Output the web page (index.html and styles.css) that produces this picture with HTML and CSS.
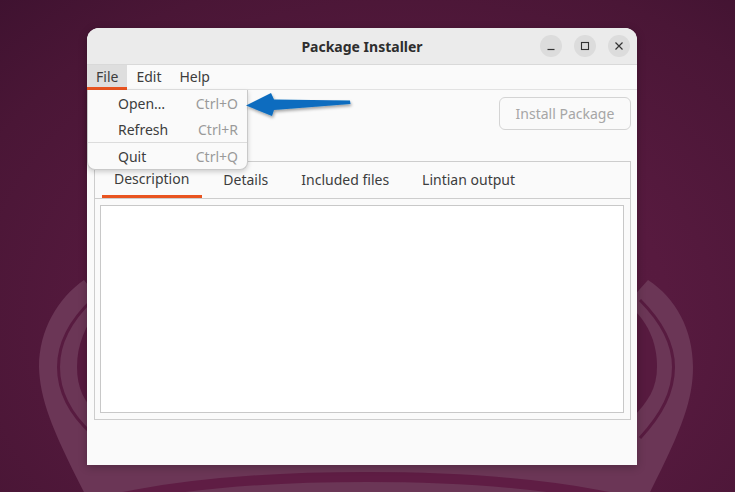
FILE: index.html
```html
<!DOCTYPE html>
<html>
<head>
<meta charset="utf-8">
<link rel="stylesheet" href="styles.css">
</head>
<body>
<div class="desktop">
  <svg class="wallpaper" width="735" height="492" viewBox="0 0 735 492">
    <path class="band" d="M84 280 C58 298 39 330 39 367 C40 400 52 430 88 500 L646 500 C682 430 693 400 693 367 C693 330 676 298 648 280 L630 300 L100 300 Z"/>
    <path class="hole" d="M100 308 C85 325 77 345 77 367 C77 388 84 402 100 418 L632 418 C648 402 657 388 657 367 C657 345 650 325 632 308 Z"/>
    <path class="line" d="M92 300 C69 322 58.5 345 58.5 367 C58.5 392 70 414 92 434"/>
    <path class="line" d="M640 300 C662 322 673.5 345 673.5 367 C673.5 392 662 414 640 438"/>
    <ellipse class="arc" cx="366" cy="537" rx="326" ry="60"/>
  </svg>

  <div class="window">
    <div class="titlebar">
      <span class="title">Package Installer</span>
      <div class="controls">
        <span class="ctl"><svg width="10" height="10" viewBox="0 0 10 10"><path d="M1.5 8.5 H8.5" stroke="#333" stroke-width="1.2"/></svg></span>
        <span class="ctl"><svg width="10" height="10" viewBox="0 0 10 10"><rect x="1.5" y="1.5" width="7" height="7" fill="none" stroke="#333" stroke-width="1.1"/></svg></span>
        <span class="ctl"><svg width="10" height="10" viewBox="0 0 10 10"><path d="M1.5 1.5 L8.5 8.5 M8.5 1.5 L1.5 8.5" stroke="#333" stroke-width="1.2"/></svg></span>
      </div>
    </div>
    <div class="menubar">
      <span class="mitem active">File</span>
      <span class="mitem">Edit</span>
      <span class="mitem">Help</span>
    </div>
    <div class="content">
      <div class="toprow">
        <button class="install">Install Package</button>
      </div>
      <div class="notebook">
        <div class="tabs">
          <span class="tab current">Description</span>
          <span class="tab">Details</span>
          <span class="tab">Included files</span>
          <span class="tab">Lintian output</span>
        </div>
        <div class="page">
          <div class="textview"></div>
        </div>
      </div>
    </div>

    <div class="dropdown">
      <div class="ditem"><span>Open…</span><span class="accel">Ctrl+O</span></div>
      <div class="ditem"><span>Refresh</span><span class="accel">Ctrl+R</span></div>
      <div class="sep"></div>
      <div class="ditem"><span>Quit</span><span class="accel">Ctrl+Q</span></div>
    </div>
  </div>

  <svg class="arrow" width="120" height="40" viewBox="240 85 120 40">
    <defs>
      <filter id="sh" x="-20%" y="-40%" width="140%" height="180%">
        <feDropShadow dx="1" dy="2" stdDeviation="1.5" flood-color="#000" flood-opacity="0.35"/>
      </filter>
    </defs>
    <path d="M246 105.5 L271 93 L274 99.5 L350 100.5 L350.5 104 L274 110 L272 116 Z" fill="#0a6cbf" filter="url(#sh)"/>
  </svg>
</div>
</body>
</html>
```

FILE: styles.css
```css
* { box-sizing: border-box; }

html, body {
  margin: 0;
  padding: 0;
}

body {
  width: 735px;
  height: 492px;
  overflow: hidden;
  font-family: "Noto Sans", "DejaVu Sans", sans-serif;
  font-size: 14px;
  color: #3d3d3d;
}

.desktop {
  position: relative;
  width: 735px;
  height: 492px;
  background: radial-gradient(ellipse 80% 90% at 55% 65%, #5b1c42 0%, #571a3f 45%, #4a1636 80%, #3f1230 100%);
  overflow: hidden;
}

.wallpaper {
  position: absolute;
  left: 0;
  top: 0;
}

.band { fill: #6b3656; }
.hole { fill: #571a3f; }
.line { fill: none; stroke: #581b40; stroke-width: 3; }
.arc { fill: none; stroke: #5f1d44; stroke-width: 10; }

.window {
  position: absolute;
  left: 87px;
  top: 28px;
  width: 550px;
  height: 437px;
  background: #fafafa;
  border-radius: 12px 12px 0 0;
  display: flex;
  flex-direction: column;
  box-shadow: 0 2px 8px rgba(0, 0, 0, 0.25);
}

.titlebar {
  height: 37px;
  flex: none;
  background: #ebebeb;
  border-radius: 12px 12px 0 0;
  border-bottom: 1px solid #d9d9d9;
  display: flex;
  align-items: center;
  justify-content: center;
  position: relative;
}

.title {
  font-weight: bold;
  font-size: 14px;
  color: #2e2e2e;
}

.controls {
  position: absolute;
  right: 7px;
  top: 7px;
  display: flex;
  gap: 12px;
}

.ctl {
  width: 22px;
  height: 22px;
  border-radius: 50%;
  background: #dcdcdc;
  display: flex;
  align-items: center;
  justify-content: center;
}

.menubar {
  height: 25px;
  flex: none;
  display: flex;
  background: #fafafa;
  border-bottom: 1px solid #e2e2e2;
}

.mitem {
  padding: 0 9px;
  height: 25px;
  line-height: 23px;
  color: #3d3d3d;
}

.mitem.active {
  background: #dedede;
  border-bottom: 3px solid #e95420;
}

.content {
  flex: 1;
  padding: 7px 6px 45px 7px;
  display: flex;
  flex-direction: column;
}

.toprow {
  display: flex;
  justify-content: flex-end;
  height: 33px;
  margin-bottom: 31px;
}

.install {
  font-family: inherit;
  font-size: 14px;
  color: #a6a6a6;
  background: #fafafa;
  border: 1px solid #d4d4d4;
  border-radius: 6px;
  width: 132px;
  height: 33px;
  padding: 0;
}

.notebook {
  flex: 1;
  border: 1px solid #cdcdcd;
  display: flex;
  flex-direction: column;
}

.tabs {
  height: 37px;
  flex: none;
  display: flex;
  gap: 9px;
  padding-left: 7px;
  border-bottom: 1px solid #cdcdcd;
}

.tab {
  padding: 0 12px;
  line-height: 36px;
  height: 36px;
  color: #3d3d3d;
}

.tab.current {
  padding: 0 13px 0 12px;
  border-bottom: 3px solid #e95420;
  line-height: 33px;
}

.page {
  flex: 1;
  padding: 6px 6px 6px 5px;
  display: flex;
}

.textview {
  flex: 1;
  background: #ffffff;
  border: 1px solid #c8c8c8;
}

.dropdown {
  position: absolute;
  left: 0;
  top: 62px;
  width: 161px;
  background: #fafafa;
  border: 1px solid #c9c9c9;
  border-top: none;
  border-radius: 0 0 8px 8px;
  box-shadow: 0 2px 5px rgba(0, 0, 0, 0.18);
}

.ditem {
  height: 26px;
  display: flex;
  align-items: center;
  justify-content: space-between;
  padding: 0 9px 0 30px;
  color: #3d3d3d;
}

.accel {
  color: #9a9a9a;
}

.sep {
  height: 1px;
  background: #dcdcdc;
}

.arrow {
  position: absolute;
  left: 240px;
  top: 85px;
}
```
